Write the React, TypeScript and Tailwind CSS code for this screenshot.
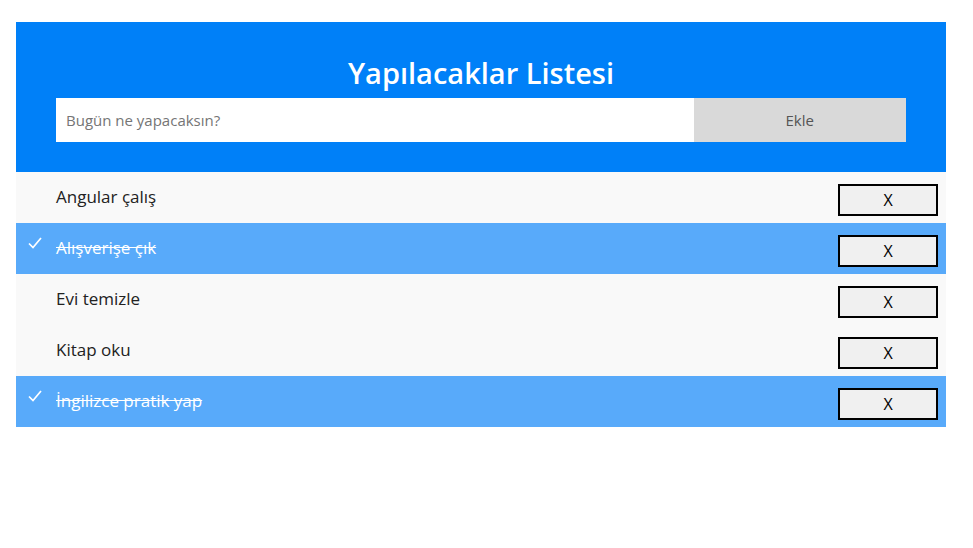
import React, { useState } from 'react';

interface Todo {
  id: number;
  text: string;
  done: boolean;
}

const initialTodos: Todo[] = [
  { id: 1, text: 'Angular çalış', done: false },
  { id: 2, text: 'Alışverişe çık', done: true },
  { id: 3, text: 'Evi temizle', done: false },
  { id: 4, text: 'Kitap oku', done: false },
  { id: 5, text: 'İngilizce pratik yap', done: true },
];

export default function App() {
  const [todos, setTodos] = useState<Todo[]>(initialTodos);
  const [text, setText] = useState('');

  const addTodo = () => {
    if (!text.trim()) return;
    setTodos(prev => [...prev, { id: Date.now(), text, done: false }]);
    setText('');
  };

  const toggle = (id: number) => {
    setTodos(prev => prev.map(t => (t.id === id ? { ...t, done: !t.done } : t)));
  };

  const remove = (id: number) => {
    setTodos(prev => prev.filter(t => t.id !== id));
  };

  return (
    <div className="min-h-[548px] bg-white font-['Segoe_UI','Open_Sans',sans-serif]">
      <div className="ml-4 pt-[22px] w-[930px]">
        {/* Header */}
        <div className="bg-[#0080f8] px-10 pt-[31px] pb-[30px] flex flex-col">
          <h2 className="text-white text-[29px] font-semibold leading-[40px] text-center mb-[5px]">
            Yapılacaklar Listesi
          </h2>
          <div className="flex h-[44px]">
            <input
              value={text}
              onChange={e => setText(e.target.value)}
              placeholder="Bugün ne yapacaksın?"
              className="w-3/4 h-full bg-white px-[10px] text-[15px] text-gray-800 placeholder:text-[#757575] outline-none"
            />
            <button
              onClick={addTodo}
              className="w-1/4 h-full bg-[#d9d9d9] text-[#555] text-[15px]"
            >
              Ekle
            </button>
          </div>
        </div>

        {/* List */}
        <ul>
          {todos.map(todo => (
            <li
              key={todo.id}
              onClick={() => toggle(todo.id)}
              className={`relative h-[51px] flex items-start justify-between pl-10 pr-2 cursor-pointer ${
                todo.done ? 'bg-[#58aafa] text-white' : 'bg-[#f9f9f9] text-[#222]'
              }`}
            >
              {todo.done && (
                <svg
                  className="absolute left-[12px] top-[14px]"
                  width="14"
                  height="12"
                  viewBox="0 0 14 12"
                  fill="none"
                >
                  <path d="M1 6.5l4 4L13 1" stroke="white" strokeWidth="1.7" />
                </svg>
              )}
              <span
                className={`text-[17px] leading-[24px] pt-[13px] ${todo.done ? 'line-through' : ''}`}
              >
                {todo.text}
              </span>
              <button
                onClick={e => {
                  e.stopPropagation();
                  remove(todo.id);
                }}
                className="mt-3 w-[100px] h-[32px] border-2 border-black bg-[#f0f0f0] text-black text-[16px] leading-none"
              >
                X
              </button>
            </li>
          ))}
        </ul>
      </div>
    </div>
  );
}
